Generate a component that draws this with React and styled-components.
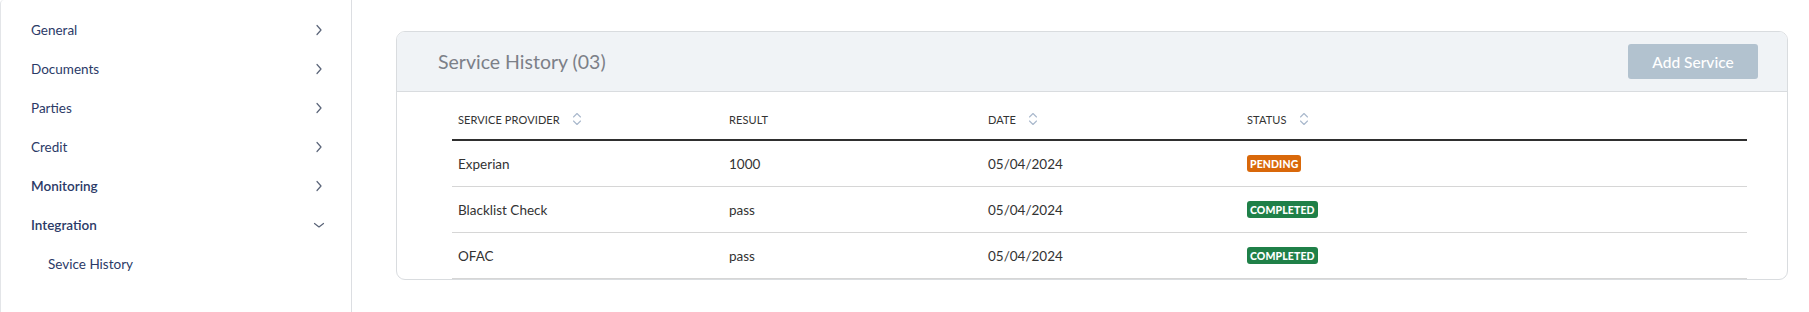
import styled, { createGlobalStyle } from 'styled-components';

const GlobalStyle = createGlobalStyle`
  html, body {
    margin: 0;
    padding: 0;
    background: #ffffff;
    font-family: Lato, "Liberation Sans", sans-serif;
  }
  * { box-sizing: border-box; }
`;

const menu = [
  { label: 'General' },
  { label: 'Documents' },
  { label: 'Parties' },
  { label: 'Credit' },
  { label: 'Monitoring', bold: true },
  { label: 'Integration', bold: true, open: true },
];

const rows = [
  { provider: 'Experian', result: '1000', date: '05/04/2024', status: 'PENDING' },
  { provider: 'Blacklist Check', result: 'pass', date: '05/04/2024', status: 'COMPLETED' },
  { provider: 'OFAC', result: 'pass', date: '05/04/2024', status: 'COMPLETED' },
];

const Chevron = ({ open }) => (
  <svg width="12" height="12" viewBox="0 0 12 12" fill="none" stroke="#5a6478" strokeWidth="1.2" strokeLinecap="round" strokeLinejoin="round">
    {open ? <path d="M1.5 4.5 L6 8 L10.5 4.5" /> : <path d="M4 1.5 L8 6 L4 10.5" />}
  </svg>
);

const SortIcon = () => (
  <svg width="10" height="14" viewBox="0 0 10 14" fill="none" stroke="#a9b8cc" strokeWidth="1.1" strokeLinecap="round" strokeLinejoin="round">
    <path d="M1.5 5 L5 1.5 L8.5 5" />
    <path d="M1.5 9 L5 12.5 L8.5 9" />
  </svg>
);

const App = () => {
  return (
    <Page>
      <GlobalStyle />
      <Sidebar>
        {menu.map((m) => (
          <MenuItem key={m.label} $bold={m.bold}>
            <span>{m.label}</span>
            <Chevron open={m.open} />
          </MenuItem>
        ))}
        <SubItem>Sevice History</SubItem>
      </Sidebar>

      <Main>
        <Card>
          <CardHeader>
            <Title>Service History (03)</Title>
            <AddButton>Add Service</AddButton>
          </CardHeader>
          <Table>
            <HeadRow>
              <HeadCell>SERVICE PROVIDER <SortIcon /></HeadCell>
              <HeadCell>RESULT</HeadCell>
              <HeadCell>DATE <SortIcon /></HeadCell>
              <HeadCell>STATUS <SortIcon /></HeadCell>
            </HeadRow>
            {rows.map((r) => (
              <BodyRow key={r.provider}>
                <Cell>{r.provider}</Cell>
                <Cell>{r.result}</Cell>
                <Cell>{r.date}</Cell>
                <Cell>
                  <Badge $status={r.status}>{r.status}</Badge>
                </Cell>
              </BodyRow>
            ))}
          </Table>
        </Card>
      </Main>
    </Page>
  );
};

const Page = styled.div`
  display: flex;
  width: 1809px;
  height: 312px;
  overflow: hidden;
`;

const Sidebar = styled.aside`
  width: 352px;
  flex-shrink: 0;
  border-left: 1px solid #e3e5e8;
  border-right: 1px solid #dcdee2;
  border-top-left-radius: 4px;
  padding: 10px 26px 0 30px;
`;

const MenuItem = styled.div`
  display: flex;
  align-items: center;
  justify-content: space-between;
  height: 39px;
  font-size: 13.5px;
  font-weight: ${(p) => (p.$bold ? 600 : 400)};
  color: #2b3a67;
`;

const SubItem = styled.div`
  height: 39px;
  display: flex;
  align-items: center;
  padding-left: 17px;
  font-size: 13.5px;
  color: #2b3a67;
`;

const Main = styled.main`
  flex: 1;
  padding: 31px 21px 0 44px;
`;

const Card = styled.section`
  border: 1px solid #d9dcdf;
  border-radius: 9px;
  overflow: hidden;
  background: #fff;
`;

const CardHeader = styled.header`
  display: flex;
  align-items: center;
  justify-content: space-between;
  height: 60px;
  padding: 0 29px 0 41px;
  background: #f0f3f6;
  border-bottom: 1px solid #d9dcdf;
`;

const Title = styled.h2`
  margin: 0;
  font-size: 19.5px;
  font-weight: 400;
  color: #7c8088;
`;

const AddButton = styled.button`
  width: 130px;
  height: 35px;
  border: none;
  border-radius: 3px;
  background: #b2c2cf;
  color: #ffffff;
  font-family: inherit;
  font-size: 15.5px;
  font-weight: 500;
`;

const Table = styled.div`
  margin: 9px 40px 0 55px;
`;

const columns = '271px 259px 259px 1fr';

const HeadRow = styled.div`
  display: grid;
  grid-template-columns: ${columns};
  height: 40px;
  border-bottom: 2px solid #2f2f2f;
`;

const HeadCell = styled.div`
  display: flex;
  align-items: center;
  gap: 12px;
  padding: 0 6px 2px;
  font-size: 11px;
  color: #333;
  letter-spacing: 0.1px;
`;

const BodyRow = styled.div`
  display: grid;
  grid-template-columns: ${columns};
  height: 46px;
  border-bottom: 1px solid #d6d6d6;
`;

const Cell = styled.div`
  display: flex;
  align-items: center;
  padding: 0 6px;
  font-size: 13.5px;
  color: #333;
`;

const Badge = styled.span`
  display: inline-flex;
  align-items: center;
  height: 17px;
  padding: 0 3px;
  border-radius: 3px;
  background: ${(p) => (p.$status === 'PENDING' ? '#d9680a' : '#1f8048')};
  color: #fff;
  font-size: 10.5px;
  font-weight: 900;
  letter-spacing: 0.1px;
`;

export default App;
